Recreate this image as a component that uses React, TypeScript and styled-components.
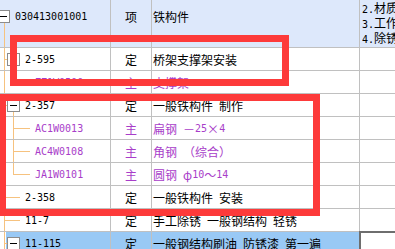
import type { ReactNode } from "react";
import styled, { createGlobalStyle } from "styled-components";

const GlobalStyle = createGlobalStyle`
  html, body {
    margin: 0;
    padding: 0;
    background: #fff;
    overflow: hidden;
  }
  body {
    font-family: "Noto Sans CJK SC", sans-serif;
    font-size: 12px;
    color: #000;
  }
`;

const GUIDE = "#f6c27f";
const GRID = "#c0c0c0";

const Screen = styled.div`
  position: relative;
  width: 395px;
  height: 249px;
  overflow: hidden;
  background: #fff;
`;

const Sheet = styled.div`
  display: grid;
  grid-template-columns: 111px 41px 208px 60px;
  margin-top: -15px;
`;

const Cell = styled.div<{ $head?: boolean; $sel?: boolean; $tone?: string }>`
  box-sizing: border-box;
  height: ${(p) => (p.$head ? 63 : 23)}px;
  border-right: 1px solid ${GRID};
  border-bottom: 1px solid ${GRID};
  background: ${(p) => (p.$head ? "#dde8fb" : p.$sel ? "#99c9f5" : "#fff")};
  color: ${(p) => p.$tone ?? "#000"};
  display: flex;
  align-items: center;
  white-space: nowrap;
  overflow: hidden;
  line-height: 15px;
`;

const CodeCell = styled(Cell)`
  align-items: stretch;
  ${(p) =>
    p.$sel ? "background: linear-gradient(90deg, #fff 6px, #99c9f5 6px);" : ""}
`;

const KindCell = styled(Cell)`
  justify-content: center;
`;

const NameCell = styled(Cell)`
  padding-left: 1px;
`;

const NoteCell = styled(Cell)<{ $focus?: boolean }>`
  border-right: none;
  flex-direction: column;
  align-items: flex-start;
  justify-content: flex-start;
  padding-left: 2px;
  position: relative;
  ${(p) =>
    p.$focus
      ? `outline: 2px solid #6e6e6e; outline-offset: -1px; z-index: 1; overflow: visible;`
      : ""}
`;

const NoteLine = styled.div`
  flex: none;
  height: 15px;
  line-height: 15px;
  overflow: hidden;
`;

const Lat = styled.span`
  font-family: "DejaVu Sans Mono", monospace;
  font-size: 10px;
  white-space: pre;
`;

const Code = styled(Lat)`
  align-self: center;
  margin-left: 5px;
`;

const Rail = styled.span<{ $w: number; $tee?: boolean; $end?: boolean }>`
  position: relative;
  flex: none;
  width: ${(p) => p.$w}px;
  &::before {
    content: "";
    position: absolute;
    left: 4px;
    top: 0;
    bottom: ${(p) => (p.$end ? "50%" : "0")};
    width: 1px;
    background: ${GUIDE};
  }
  &::after {
    content: "";
    display: ${(p) => (p.$tee ? "block" : "none")};
    position: absolute;
    left: 4px;
    right: 0;
    top: 50%;
    height: 1px;
    background: ${GUIDE};
  }
`;

const Toggle = styled.span<{ $tail?: number; $tx?: number; $shift?: number }>`
  position: relative;
  flex: none;
  align-self: center;
  box-sizing: border-box;
  width: 13px;
  height: 13px;
  margin-left: ${(p) => p.$shift ?? 0}px;
  border: 1px solid #8c8c8c;
  background: #fff;
  &::before {
    content: "";
    position: absolute;
    left: 2px;
    right: 2px;
    top: 5px;
    height: 1px;
    background: #000;
  }
  &::after {
    content: "";
    position: absolute;
    left: ${(p) => p.$tx ?? 5}px;
    top: 100%;
    margin-top: 1px;
    width: 1px;
    height: ${(p) => p.$tail ?? 0}px;
    background: ${GUIDE};
  }
`;

const Mark = styled.div<{ $x: number; $y: number; $w: number; $h: number }>`
  position: absolute;
  left: ${(p) => p.$x}px;
  top: ${(p) => p.$y}px;
  width: ${(p) => p.$w}px;
  height: ${(p) => p.$h}px;
  box-sizing: border-box;
  border: 7px solid #fd3a3a;
  pointer-events: none;
  z-index: 2;
`;

// split ascii runs so latin text gets the half-width mono face
const mix = (s: string) =>
  s
    .split(/([\x20-\x7e]+)/)
    .filter(Boolean)
    .map((part, i) =>
      /^[\x20-\x7e]+$/.test(part) ? <Lat key={i}>{part}</Lat> : <span key={i}>{part}</span>
    );

const PURPLE = "#a83dc9";

type Row = {
  code: string;
  kind: string;
  name: string;
  level: 1 | 2;
  open?: boolean;
  last?: boolean;
  main?: boolean;
  sel?: boolean;
};

const rows: Row[] = [
  { code: "2-595", kind: "定", name: "桥架支撑架安装", level: 1, open: true },
  { code: "ZZ1W0500", kind: "主", name: "支撑架", level: 2, main: true, last: true },
  { code: "2-357", kind: "定", name: "一般铁构件 制作", level: 1, open: true },
  { code: "AC1W0013", kind: "主", name: "扁钢 －25×4", level: 2, main: true },
  { code: "AC4W0108", kind: "主", name: "角钢 （综合）", level: 2, main: true },
  { code: "JA1W0101", kind: "主", name: "圆钢 φ10～14", level: 2, main: true, last: true },
  { code: "2-358", kind: "定", name: "一般铁构件 安装", level: 1 },
  { code: "11-7", kind: "定", name: "手工除锈 一般钢结构 轻锈", level: 1 },
  { code: "11-115", kind: "定", name: "一般钢结构刷油 防锈漆 第一遍", level: 1, open: true, sel: true },
];

const notes = ["1.名称", "2.材质", "3.工作", "4.除锈"];

function Tree({ row }: { row: Row }): ReactNode {
  if (row.level === 2) {
    return (
      <>
        <Rail $w={9} />
        <Rail $w={21} $tee $end={row.last} />
      </>
    );
  }
  if (row.open) {
    return (
      <>
        <Rail $w={7} $tee />
        <Toggle $tail={row.sel ? 0 : 5} />
      </>
    );
  }
  return <Rail $w={20} $tee />;
}

export default function App() {
  return (
    <Screen>
      <GlobalStyle />
      <Sheet>
        <CodeCell $head>
          <Toggle $shift={-3} $tx={6} $tail={24} />
          <Code>030413001001</Code>
        </CodeCell>
        <KindCell $head>项</KindCell>
        <NameCell $head>铁构件</NameCell>
        <NoteCell $head>
          {notes.map((n) => (
            <NoteLine key={n}>{mix(n)}</NoteLine>
          ))}
        </NoteCell>

        {rows.map((row) => {
          const tone = row.main ? PURPLE : undefined;
          return [
            <CodeCell key={row.code + "c"} $sel={row.sel} $tone={tone}>
              <Tree row={row} />
              <Code>{row.code}</Code>
            </CodeCell>,
            <KindCell key={row.code + "k"} $sel={row.sel} $tone={tone}>
              {row.kind}
            </KindCell>,
            <NameCell key={row.code + "n"} $sel={row.sel} $tone={tone}>
              {mix(row.name)}
            </NameCell>,
            <NoteCell key={row.code + "f"} $focus={row.sel} />,
          ];
        })}
      </Sheet>
      <Mark $x={10} $y={35} $w={279} $h={51} />
      <Mark $x={-1} $y={94} $w={321} $h={122} />
    </Screen>
  );
}
